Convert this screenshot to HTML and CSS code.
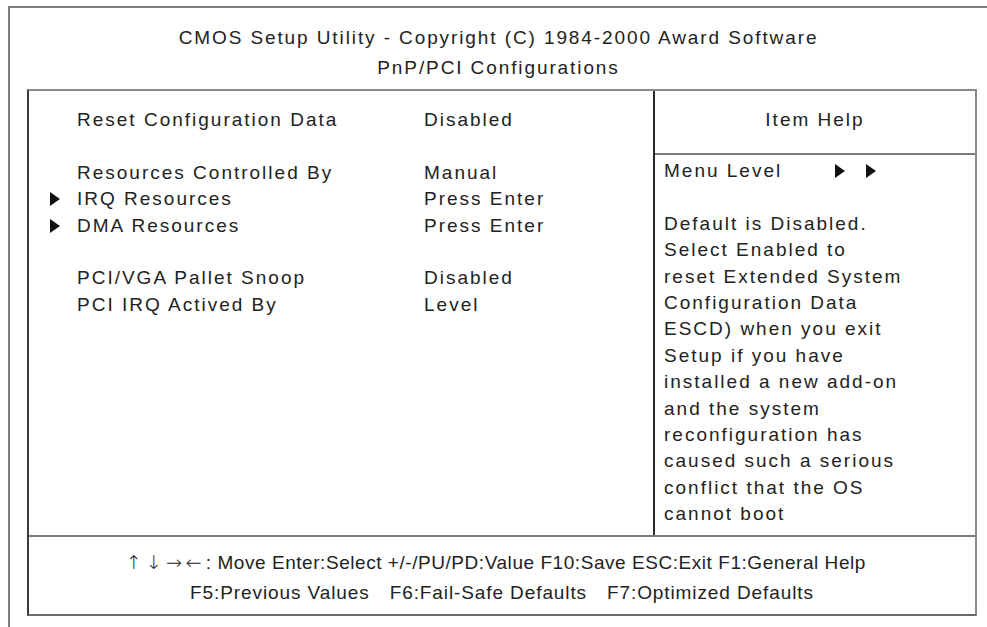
FILE: index.html
```html
<!DOCTYPE html>
<html lang="en">
<head>
  <meta charset="UTF-8" />
  <meta name="viewport" content="width=device-width, initial-scale=1" />
  <title>CMOS Setup Utility - PnP/PCI Configurations</title>
  <link rel="stylesheet" href="styles.css">
</head>
<body>

<div class="frame">
  <div class="title">
    <div>CMOS Setup Utility - Copyright (C) 1984-2000 Award Software</div>
    <div>PnP/PCI Configurations</div>
  </div>

  <div class="screen">
    <div class="main">
      <div class="menu">
        <div class="row"><span class="mark"></span><span>Reset Configuration Data</span><span>Disabled</span></div>
        <div class="row"></div>
        <div class="row"><span class="mark"></span><span>Resources Controlled By</span><span>Manual</span></div>
        <div class="row">
          <span class="mark"><svg width="10" height="14" viewBox="0 0 10 14"><path d="M0 0 L10 7 L0 14 Z" fill="#111"/></svg></span>
          <span>IRQ Resources</span><span>Press Enter</span>
        </div>
        <div class="row">
          <span class="mark"><svg width="10" height="14" viewBox="0 0 10 14"><path d="M0 0 L10 7 L0 14 Z" fill="#111"/></svg></span>
          <span>DMA Resources</span><span>Press Enter</span>
        </div>
        <div class="row"></div>
        <div class="row"><span class="mark"></span><span>PCI/VGA Pallet Snoop</span><span>Disabled</span></div>
        <div class="row"><span class="mark"></span><span>PCI IRQ Actived By</span><span>Level</span></div>
      </div>

      <div class="help">
        <div class="help-head">Item Help</div>
        <div class="help-body">
          <div class="level">
            <span>Menu Level</span>
            <span class="level-arrows">
              <svg width="10" height="14" viewBox="0 0 10 14"><path d="M0 0 L10 7 L0 14 Z" fill="#111"/></svg>
              <svg width="10" height="14" viewBox="0 0 10 14"><path d="M0 0 L10 7 L0 14 Z" fill="#111"/></svg>
            </span>
          </div>
          <div class="blank"></div>
          <div>Default is Disabled.</div>
          <div>Select Enabled to</div>
          <div>reset Extended System</div>
          <div>Configuration Data</div>
          <div>ESCD) when you exit</div>
          <div>Setup if you have</div>
          <div>installed a new add-on</div>
          <div>and the system</div>
          <div>reconfiguration has</div>
          <div>caused such a serious</div>
          <div>conflict that the OS</div>
          <div>cannot boot</div>
        </div>
      </div>
    </div>

    <div class="keys">
      <div class="keys-1"><span class="arrows">↑↓→←</span>: Move Enter:Select +/-/PU/PD:Value F10:Save ESC:Exit F1:General Help</div>
      <div class="keys-2"><span>F5:Previous Values</span><span>F6:Fail-Safe Defaults</span><span>F7:Optimized Defaults</span></div>
    </div>
  </div>
</div>

</body>
</html>
```

FILE: styles.css
```css
body {
  margin: 0;
  font-family: "Liberation Sans", Arial, sans-serif;
  font-size: 19px;
  color: #222;
  background: #fff;
  overflow: hidden;
}
.frame {
  margin: 6px 0 0 8px;
  height: 640px;
  border-top: 2px solid #7d7d7d;
  border-left: 2px solid #7d7d7d;
}
.title {
  padding-top: 15px;
  line-height: 30px;
  letter-spacing: 1.9px;
  text-align: center;
}
.screen {
  margin: 6px 0 0 17px;
  width: 950px;
  height: 527px;
  box-sizing: border-box;
  border-top: 2px solid #8a8a8a;
  border-left: 2px solid #3a3a3a;
  border-right: 2px solid #8a8a8a;
  border-bottom: 2px solid #6a6a6a;
}
.main {
  display: flex;
  height: 444px;
  letter-spacing: 2px;
}
.menu {
  width: 626px;
  box-sizing: border-box;
  padding: 16px 0 0 21px;
  border-right: 2px solid #2a2a2a;
}
.row {
  display: grid;
  grid-template-columns: 27px 347px auto;
  height: 26.4px;
  line-height: 26.4px;
}
.mark {
  display: flex;
  align-items: center;
}
.help {
  flex: 1;
}
.help-head {
  height: 64px;
  padding-top: 16px;
  box-sizing: border-box;
  line-height: 26.4px;
  text-align: center;
  border-bottom: 2px solid #7a7a7a;
}
.help-body {
  padding: 3px 0 0 9px;
  line-height: 26.4px;
}
.level {
  display: grid;
  grid-template-columns: 171px auto;
}
.level-arrows {
  display: flex;
  align-items: center;
  gap: 21px;
}
.blank {
  height: 26.4px;
}
.keys {
  border-top: 2px solid #7a7a7a;
  padding-top: 10px;
  line-height: 30px;
  text-align: center;
  letter-spacing: 0.9px;
}
.keys-1 {
  padding-right: 12px;
  letter-spacing: 0.55px;
}
.arrows {
  font-family: "DejaVu Sans", sans-serif;
  font-size: 19px;
  font-weight: 200;
  letter-spacing: 4px;
}
.keys-2 {
  display: flex;
  justify-content: center;
  gap: 20px;
}
```
